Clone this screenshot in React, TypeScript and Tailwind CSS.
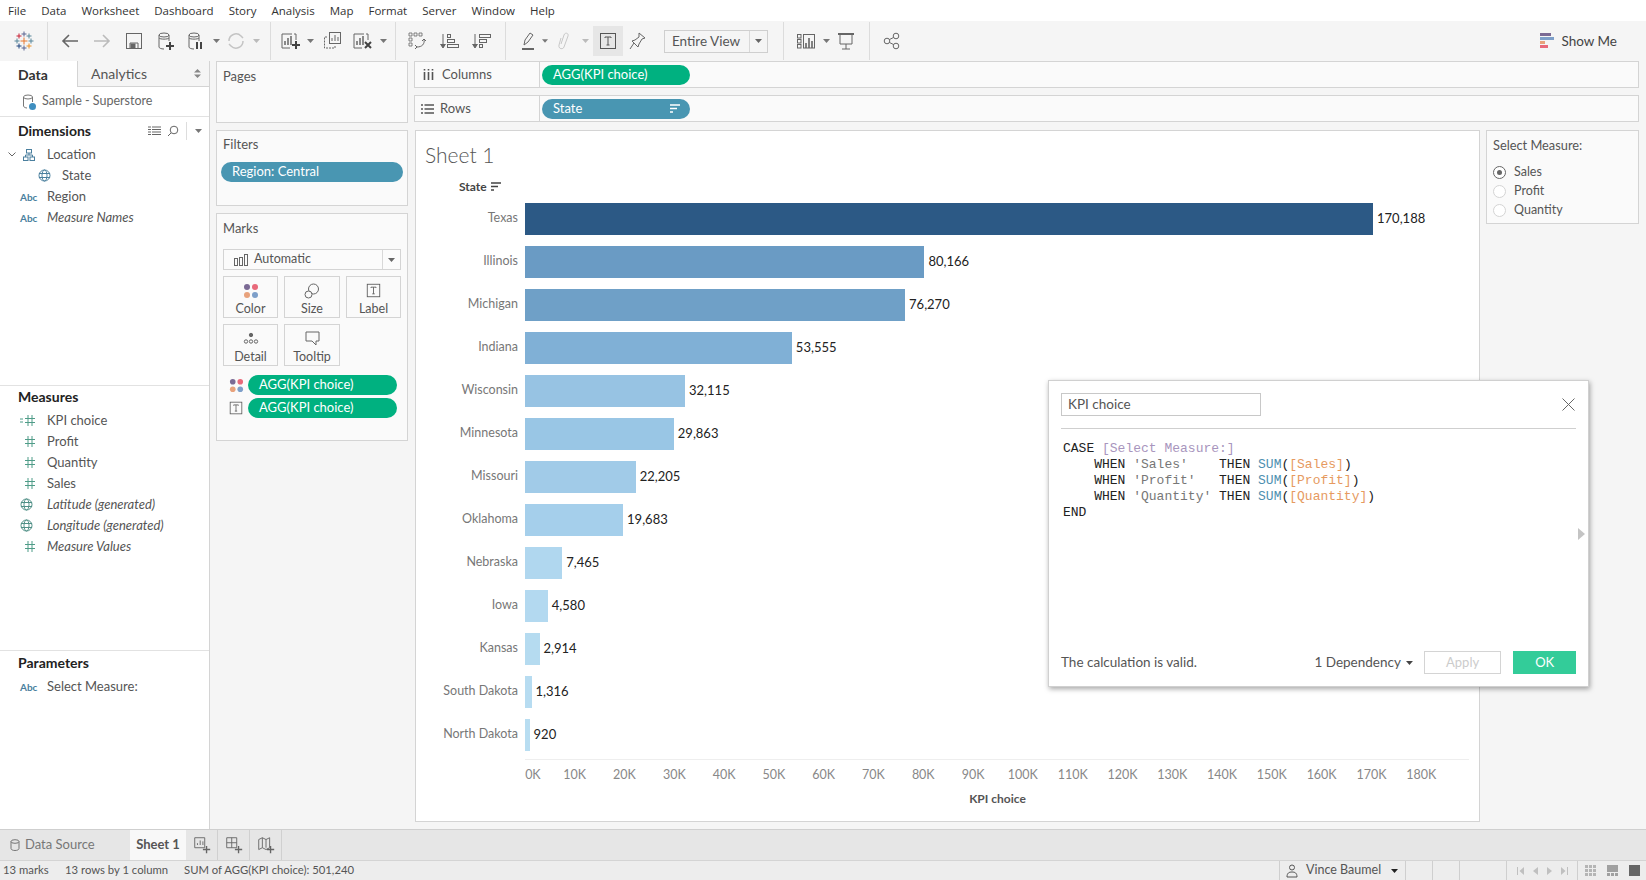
import React from "react";

const menus = ["File", "Data", "Worksheet", "Dashboard", "Story", "Analysis", "Map", "Format", "Server", "Window", "Help"];

const bars = [
  { state: "Texas", value: 170188, color: "#2c5985" },
  { state: "Illinois", value: 80166, color: "#6a9bc4" },
  { state: "Michigan", value: 76270, color: "#6fa0c7" },
  { state: "Indiana", value: 53555, color: "#80b0d6" },
  { state: "Wisconsin", value: 32115, color: "#97c3e3" },
  { state: "Minnesota", value: 29863, color: "#99c6e5" },
  { state: "Missouri", value: 22205, color: "#a1cbe8" },
  { state: "Oklahoma", value: 19683, color: "#a5cfeb" },
  { state: "Nebraska", value: 7465, color: "#b0d7ef" },
  { state: "Iowa", value: 4580, color: "#b3d9f0" },
  { state: "Kansas", value: 2914, color: "#b5dbf0" },
  { state: "South Dakota", value: 1316, color: "#b7dcf1" },
  { state: "North Dakota", value: 920, color: "#b8ddf1" },
];

const ticks = Array.from({ length: 19 }, (_, i) => `${i * 10}K`);

function Ico({ children, size = 22, className = "text-[#666]" }: { children: React.ReactNode; size?: number; className?: string }) {
  return (
    <svg width={size} height={size} viewBox="0 0 22 22" fill="none" stroke="currentColor" strokeWidth="1" className={className}>
      {children}
    </svg>
  );
}

function Caret({ className = "text-[#777]" }: { className?: string }) {
  return (
    <svg width="7" height="4" viewBox="0 0 7 4" className={className}>
      <path d="M0 0h7L3.5 4z" fill="currentColor" />
    </svg>
  );
}

function Sep() {
  return <div className="h-[38px] w-px flex-none bg-[#dcdcdc]" />;
}

function TableauLogo() {
  const cross = (x: number, y: number, c: string, r = 2.5) => (
    <path key={`${x}-${y}`} d={`M${x - r} ${y}h${r * 2}M${x} ${y - r}v${r * 2}`} stroke={c} strokeWidth="1" />
  );
  return (
    <svg width="20" height="20" viewBox="0 0 20 20" fill="none">
      {cross(10, 10, "#e8762c", 3.5)}
      {cross(10, 3, "#5b6591")}
      {cross(10, 17, "#5b6591")}
      {cross(3, 10, "#59879b")}
      {cross(17, 10, "#59879b")}
      {cross(5, 5, "#c72035")}
      {cross(15, 5, "#59879b")}
      {cross(5, 15, "#1f457e")}
      {cross(15, 15, "#eb9129")}
    </svg>
  );
}

function BarsIcon({ plus, cross }: { plus?: boolean; cross?: boolean }) {
  return (
    <Ico>
      <path d="M13 4H3v14h8" />
      <path d="M6 15v-4M9 15V8M12 15V6" strokeWidth="1.5" />
      <path d="M15 4h2v6" />
      {plus && <path d="M17 11v8M13 15h8" stroke="#444" strokeWidth="2" />}
      {cross && <path d="M14 12l6 6M20 12l-6 6" stroke="#444" strokeWidth="2" />}
    </Ico>
  );
}

function DbIcon({ badge }: { badge: "plus" | "pause" }) {
  return (
    <Ico>
      <ellipse cx="9" cy="5" rx="5" ry="2" />
      <path d="M4 5v12c0 1 2 2 5 2M14 5v6M4 8c1 1.500 9 1.500 10 0" />
      {badge === "plus" && <path d="M15 12v8M11 16h8" stroke="#444" strokeWidth="2" />}
      {badge === "pause" && <path d="M12 12v7M16 12v7" stroke="#444" strokeWidth="2" />}
    </Ico>
  );
}

function SortIcon({ desc }: { desc?: boolean }) {
  return (
    <Ico>
      <path d="M5 4v13M2.500 14L5 18l2.500-4" fill="#666" />
      {desc ? (
        <>
          <rect x="9.500" y="4.500" width="11" height="3" />
          <rect x="9.500" y="9.500" width="7" height="3" />
          <rect x="9.500" y="14.500" width="3" height="3" />
        </>
      ) : (
        <>
          <rect x="9.500" y="4.500" width="3" height="3" />
          <rect x="9.500" y="9.500" width="7" height="3" />
          <rect x="9.500" y="14.500" width="11" height="3" />
        </>
      )}
    </Ico>
  );
}

function TBox({ size = 18 }: { size?: number }) {
  return (
    <svg width={size} height={size} viewBox="0 0 18 18" fill="none" className="text-[#555]">
      <rect x="1.500" y="1.500" width="15" height="15" stroke="currentColor" />
      <path d="M6 6V5h6v1M9 5v8M7.500 13h3" stroke="currentColor" />
    </svg>
  );
}

function FourDots({ size = 16 }: { size?: number }) {
  return (
    <svg width={size} height={size} viewBox="0 0 16 16">
      <circle cx="4" cy="4" r="3" fill="#7b6a94" />
      <circle cx="12" cy="4" r="3" fill="#e8697a" />
      <circle cx="4" cy="12" r="3" fill="#e8a27c" />
      <circle cx="12" cy="12" r="3" fill="#7d9fc9" />
    </svg>
  );
}

function SortLines({ className = "text-[#555]", size = 12 }: { className?: string; size?: number }) {
  return (
    <svg width={size} height={size} viewBox="0 0 12 12" className={className}>
      <path d="M1 2h10M1 5.500h7M1 9h3" stroke="currentColor" strokeWidth="1.600" fill="none" />
    </svg>
  );
}

function Globe({ className = "text-[#4f8f86]" }: { className?: string }) {
  return (
    <svg width="13" height="13" viewBox="0 0 13 13" fill="none" stroke="currentColor" className={className}>
      <circle cx="6.500" cy="6.500" r="5.500" />
      <ellipse cx="6.500" cy="6.500" rx="2.500" ry="5.500" />
      <path d="M1 4.500h11M1 8.500h11" />
    </svg>
  );
}

function Hash({ calc }: { calc?: boolean }) {
  return (
    <svg width="16" height="13" viewBox="0 0 16 13" fill="none" stroke="#4f9c88" className="flex-none">
      <path d="M8 1v11M12 1v11M5 4.500h10M5 8.500h10" />
      {calc && <path d="M0 5h3M0 8h3" />}
    </svg>
  );
}

function Abc() {
  return <span className="w-[17px] text-[10px] leading-none font-bold text-[#4a7f9e]">Abc</span>;
}

function FieldRow({ icon, name, italic, indent }: { icon: React.ReactNode; name: string; italic?: boolean; indent?: boolean }) {
  return (
    <div className="flex h-[21px] items-center text-[13px] text-[#555]">
      <div className={indent ? "ml-[38px] flex w-[24px] items-center" : "ml-[20px] flex w-[27px] items-center"}>{icon}</div>
      <span className={italic ? "italic" : ""}>{name}</span>
    </div>
  );
}

function Pill({ label, color, sort, className = "" }: { label: string; color: "green" | "blue"; sort?: boolean; className?: string }) {
  return (
    <div
      className={`flex h-[20px] items-center justify-between rounded-full pl-[11px] pr-[9px] text-[13px] text-white ${
        color === "green" ? "bg-[#00b180]" : "bg-[#4996b2]"
      } ${className}`}
    >
      <span>{label}</span>
      {sort && <SortLines className="text-white" />}
    </div>
  );
}

function MarkBtn({ label, icon }: { label: string; icon: React.ReactNode }) {
  return (
    <div className="flex h-[42px] flex-col items-center border border-[#d4d4d4] pt-[5px] text-[12.500px] text-[#555]">
      <div className="flex h-[17px] items-center">{icon}</div>
      <span className="mt-[2px] leading-[16px]">{label}</span>
    </div>
  );
}

function TabIcon({ children }: { children: React.ReactNode }) {
  return <div className="flex w-[32px] items-center justify-center border-r border-[#d0d0d0]">{children}</div>;
}

export default function App() {
  return (
    <div className="relative flex h-[880px] w-[1646px] flex-col overflow-hidden bg-[#f5f5f5] font-['Lato',sans-serif] text-[#555]">
      {/* menu */}
      <div className="flex h-[21px] items-center gap-[15px] bg-white pl-[8px] font-['Open_Sans',sans-serif] text-[11.500px] text-[#333]">
        {menus.map((m) => (
          <span key={m}>{m}</span>
        ))}
      </div>

      {/* toolbar */}
      <div className="flex h-[40px] items-center">
        <div className="flex w-[47px] justify-center"><TableauLogo /></div>
        <Sep />
        <div className="ml-[6px] flex w-[32px] justify-center">
          <Ico className="text-[#666]"><path d="M19 11H4M10 5l-6 6 6 6" strokeWidth="1.600" /></Ico>
        </div>
        <div className="flex w-[32px] justify-center">
          <Ico className="text-[#bbb]"><path d="M3 11h15M12 5l6 6-6 6" strokeWidth="1.600" /></Ico>
        </div>
        <div className="flex w-[32px] justify-center">
          <Ico><rect x="3.500" y="3.500" width="15" height="15" /><path d="M7 18v-5h8v5" /><rect x="8" y="14" width="4" height="4" fill="#666" /></Ico>
        </div>
        <div className="flex w-[32px] justify-center"><DbIcon badge="plus" /></div>
        <div className="flex w-[28px] justify-center"><DbIcon badge="pause" /></div>
        <div className="flex w-[12px] justify-center"><Caret /></div>
        <div className="flex w-[28px] justify-center">
          <Ico className="text-[#c4c4c4]"><path d="M4 11a7 7 0 0 1 12-5l2 2M18 11a7 7 0 0 1-12 5l-2-2" strokeWidth="1.500" /></Ico>
        </div>
        <div className="flex w-[12px] justify-center"><Caret className="text-[#bbb]" /></div>
        <div className="ml-[8px]"><Sep /></div>
        <div className="ml-[4px] flex w-[30px] justify-center"><BarsIcon plus /></div>
        <div className="flex w-[10px] justify-center"><Caret /></div>
        <div className="ml-[2px] flex w-[30px] justify-center">
          <Ico><rect x="8.500" y="2.500" width="11" height="11" /><path d="M11 11V8M14 11V5M17 11V7" /><path d="M6 7H3.500v11H14v-2" strokeDasharray="2 1" /></Ico>
        </div>
        <div className="flex w-[30px] justify-center"><BarsIcon cross /></div>
        <div className="flex w-[12px] justify-center"><Caret /></div>
        <div className="ml-[6px]"><Sep /></div>
        <div className="ml-[5px] flex w-[32px] justify-center">
          <Ico>
            <path d="M3 3h3v3H3zM8 3h3v3H8zM13 3h3v3h-3zM3 8h3v3H3zM3 13h3v3H3z" strokeWidth="0.800" />
            <path d="M18 9c1 5-2 8-7 8M9 15l2 2-2 2M16 11l2-2 2 2" />
          </Ico>
        </div>
        <div className="flex w-[32px] justify-center"><SortIcon /></div>
        <div className="flex w-[32px] justify-center"><SortIcon desc /></div>
        <div className="ml-[8px]"><Sep /></div>
        <div className="ml-[8px] flex w-[28px] justify-center">
          <Ico>
            <path d="M7 15l1-5 5-7 3 2-5 7zM5 19h12" />
            <path d="M5 19h12" strokeWidth="2" />
          </Ico>
        </div>
        <div className="flex w-[6px] justify-center"><Caret /></div>
        <div className="flex w-[32px] justify-center">
          <Ico className="text-[#c8c8c8]"><path d="M8 8l-2 7c-1 4 4 5 5 2l4-11c1-3-3-4-4-1l-3 9" /></Ico>
        </div>
        <div className="flex w-[10px] justify-center"><Caret className="text-[#bbb]" /></div>
        <div className="ml-[3px] flex h-[30px] w-[30px] items-center justify-center bg-[#e6e6e6]"><TBox /></div>
        <div className="flex w-[30px] justify-center">
          <Ico><path d="M12 3l6 5-3 1-3 5-1 3-6-6 3-1 4-3zM7 13l-4 6" /></Ico>
        </div>
        <div className="ml-[11px] flex h-[23px] w-[104px] items-center border border-[#cfcfcf] text-[13.500px] text-[#555]">
          <span className="flex-1 pl-[7px]">Entire View</span>
          <div className="flex h-full w-[18px] items-center justify-center border-l border-[#d8d8d8]"><Caret className="text-[#666]" /></div>
        </div>
        <div className="ml-[15px]"><Sep /></div>
        <div className="ml-[6px] flex w-[32px] justify-center">
          <Ico>
            <rect x="2.500" y="4.500" width="3.500" height="3.500" /><rect x="2.500" y="9.500" width="3.500" height="3.500" /><rect x="2.500" y="14.500" width="3.500" height="3.500" />
            <rect x="8.500" y="4.500" width="11" height="13.500" />
            <path d="M11 18v-5M14 18V8M17 18v-7" strokeWidth="1.600" />
          </Ico>
        </div>
        <div className="flex w-[8px] justify-center"><Caret /></div>
        <div className="flex w-[32px] justify-center">
          <Ico><path d="M3 4h16" strokeWidth="2" /><path d="M5 4v10h12V4M11 14v5M7 19h8" /></Ico>
        </div>
        <div className="ml-[7px]"><Sep /></div>
        <div className="ml-[6px] flex w-[32px] justify-center">
          <Ico><circle cx="6" cy="11" r="2.800" /><circle cx="15" cy="6" r="2.800" /><circle cx="15" cy="16" r="2.800" /><path d="M8.500 9.500l4-2M8.500 12.500l4 2" /></Ico>
        </div>
        <div className="ml-auto mr-[29px] flex items-center gap-[6px] text-[13.500px] text-[#444]">
          <svg width="15" height="16" viewBox="0 0 15 16">
            <rect x="0" y="0" width="11" height="3" fill="#7b6a94" />
            <rect x="0" y="4" width="14" height="3" fill="#7d9fc9" />
            <rect x="0" y="8" width="5" height="3" fill="#e8a27c" />
            <rect x="0" y="12" width="8" height="3" fill="#e8697a" />
          </svg>
          <span>Show Me</span>
        </div>
      </div>

      {/* body */}
      <div className="flex h-[768px]">
        {/* data pane */}
        <div className="flex w-[210px] flex-none flex-col border-r border-[#d4d4d4] bg-white">
          <div className="flex h-[26px] flex-none items-center text-[14px]">
            <div className="flex h-full w-[77px] items-center pl-[18px] font-bold text-[#333]">Data</div>
            <div className="flex h-full flex-1 items-center justify-between border-b border-l border-[#d4d4d4] bg-[#f5f5f5] pl-[13px] pr-[8px] text-[#555]">
              <span>Analytics</span>
              <svg width="7" height="9" viewBox="0 0 7 9"><path d="M0 3.500h7L3.500 0zM0 5.500h7L3.500 9z" fill="#888" /></svg>
            </div>
          </div>
          <div className="flex h-[30px] flex-none items-center gap-[6px] border-b border-[#e2e2e2] pl-[22px] text-[12.500px] text-[#666]">
            <svg width="14" height="16" viewBox="0 0 14 16" fill="none" stroke="#777">
              <ellipse cx="6" cy="3" rx="4.500" ry="2" />
              <path d="M1.500 3v9c0 1 2 2 3.500 2M10.500 3v5" />
              <circle cx="10.500" cy="12.500" r="3.500" fill="#3f8fc0" stroke="none" />
            </svg>
            <span>Sample - Superstore</span>
          </div>

          <div className="h-[268px] flex-none">
            <div className="flex h-[27px] items-center justify-between pl-[18px] pr-[7px]">
              <span className="text-[14px] font-bold text-[#222]">Dimensions</span>
              <div className="flex items-center text-[#666]">
                <svg width="13" height="10" viewBox="0 0 13 10" stroke="#666" fill="none"><path d="M0 1h3M4 1h9M0 3.500h3M4 3.500h9M0 6h3M4 6h9M0 8.500h3M4 8.500h9" /></svg>
                <svg width="12" height="12" viewBox="0 0 12 12" fill="none" stroke="#666" className="ml-[6px]"><circle cx="7" cy="5" r="3.800" /><path d="M4 8l-3 3" /></svg>
                <div className="ml-[7px] mr-[8px] h-[18px] w-px bg-[#ddd]" />
                <Caret />
              </div>
            </div>
            <div className="relative flex h-[21px] items-center text-[13px] text-[#555]">
              <svg width="8" height="5" viewBox="0 0 8 5" fill="none" stroke="#666" className="ml-[8px]"><path d="M.5.500L4 4 7.500.500" /></svg>
              <svg width="12" height="12" viewBox="0 0 12 12" fill="none" stroke="#4a7f9e" className="ml-[7px]">
                <rect x="3.500" y="0.500" width="5" height="3.500" /><rect x="0.500" y="8" width="4.500" height="3.500" /><rect x="7" y="8" width="4.500" height="3.500" /><path d="M6 4v2M2.500 8V6h7v2" />
              </svg>
              <span className="ml-[12px]">Location</span>
            </div>
            <FieldRow indent icon={<Globe className="text-[#4a7f9e]" />} name="State" />
            <FieldRow icon={<Abc />} name="Region" />
            <FieldRow icon={<Abc />} name="Measure Names" italic />
          </div>

          <div className="h-[265px] flex-none border-t border-[#e2e2e2]">
            <div className="flex h-[24px] items-center pb-[4px] pl-[18px] text-[14px] font-bold text-[#222]">Measures</div>
            <FieldRow icon={<Hash calc />} name="KPI choice" />
            <FieldRow icon={<Hash />} name="Profit" />
            <FieldRow icon={<Hash />} name="Quantity" />
            <FieldRow icon={<Hash />} name="Sales" />
            <FieldRow icon={<Globe />} name="Latitude (generated)" italic />
            <FieldRow icon={<Globe />} name="Longitude (generated)" italic />
            <FieldRow icon={<Hash />} name="Measure Values" italic />
          </div>

          <div className="flex-1 border-t border-[#e2e2e2]">
            <div className="flex h-[25px] items-center pb-[2px] pl-[18px] text-[14px] font-bold text-[#222]">Parameters</div>
            <FieldRow icon={<Abc />} name="Select Measure:" />
          </div>
        </div>

        {/* pages, filters, marks */}
        <div className="ml-[6px] flex w-[192px] flex-none flex-col gap-[7px] text-[13px]">
          <div className="h-[62px] border border-[#d4d4d4] bg-[#fafafa] pl-[6px] pt-[5px]">Pages</div>
          <div className="h-[76px] border border-[#d4d4d4] bg-[#fafafa] pt-[4px]">
            <div className="pl-[6px]">Filters</div>
            <Pill label="Region: Central" color="blue" className="mx-[4px] mt-[7px]" />
          </div>
          <div className="h-[228px] border border-[#d4d4d4] bg-[#fafafa] px-[6px] pt-[5px]">
            <div className="h-[30px]">Marks</div>
            <div className="flex h-[21px] items-center border border-[#d4d4d4] bg-[#fbfbfb] text-[12.500px]">
              <svg width="14" height="12" viewBox="0 0 14 12" fill="none" stroke="#666" className="ml-[10px]">
                <rect x="0.500" y="4.500" width="3" height="7" /><rect x="5.500" y="3.500" width="3" height="8" /><rect x="10.500" y="0.500" width="3" height="11" />
              </svg>
              <span className="ml-[6px] flex-1">Automatic</span>
              <div className="flex h-full w-[18px] items-center justify-center border-l border-[#d8d8d8]"><Caret className="text-[#666]" /></div>
            </div>
            <div className="mt-[6px] grid w-[178px] grid-cols-[55px_56px_55px] gap-[6px]">
              <MarkBtn label="Color" icon={<FourDots />} />
              <MarkBtn
                label="Size"
                icon={
                  <svg width="16" height="16" viewBox="0 0 16 16" fill="none" stroke="#666">
                    <circle cx="9.500" cy="6" r="5" /><circle cx="4.500" cy="11.500" r="3.500" fill="#fafafa" />
                  </svg>
                }
              />
              <MarkBtn label="Label" icon={<TBox size={15} />} />
              <MarkBtn
                label="Detail"
                icon={
                  <svg width="16" height="14" viewBox="0 0 16 14" stroke="#666" fill="none">
                    <circle cx="8" cy="3" r="1.700" fill="#666" /><circle cx="3" cy="9.500" r="1.700" /><circle cx="8" cy="9.500" r="1.700" /><circle cx="13" cy="9.500" r="1.700" />
                  </svg>
                }
              />
              <MarkBtn
                label="Tooltip"
                icon={
                  <svg width="15" height="15" viewBox="0 0 15 15" fill="none" stroke="#666"><path d="M1 1h13v9h-3v4l-4-4H1z" /></svg>
                }
              />
            </div>
            <div className="mt-[9px] flex items-center">
              <div className="flex w-[25px] pl-[6px]"><FourDots size={15} /></div>
              <Pill label="AGG(KPI choice)" color="green" className="w-[149px]" />
            </div>
            <div className="mt-[3px] flex items-center">
              <div className="flex w-[25px] pl-[6px]"><TBox size={14} /></div>
              <Pill label="AGG(KPI choice)" color="green" className="w-[149px]" />
            </div>
          </div>
        </div>

        {/* shelves and view */}
        <div className="ml-[6px] flex w-[1225px] flex-none flex-col">
          <div className="flex h-[27px] items-center border border-[#d4d4d4] bg-[#fafafa] text-[13px]">
            <div className="flex h-full w-[125px] flex-none items-center gap-[8px] border-r border-[#d4d4d4] pl-[8px]">
              <svg width="11" height="11" viewBox="0 0 11 11" stroke="#555" strokeWidth="1.600"><path d="M1.500 3v8M5.500 3v8M9.500 3v8" /><path d="M1.500 0v1.500M5.500 0v1.500M9.500 0v1.500" /></svg>
              <span>Columns</span>
            </div>
            <Pill label="AGG(KPI choice)" color="green" className="ml-[2px] w-[148px]" />
          </div>
          <div className="mt-[7px] flex h-[27px] items-center border border-[#d4d4d4] bg-[#fafafa] text-[13px]">
            <div className="flex h-full w-[125px] flex-none items-center gap-[6px] border-r border-[#d4d4d4] pl-[6px]">
              <svg width="13" height="10" viewBox="0 0 13 10" stroke="#555" strokeWidth="1.400"><path d="M0 1h2M3.500 1H13M0 5h2M3.500 5H13M0 9h2M3.500 9H13" /></svg>
              <span>Rows</span>
            </div>
            <Pill label="State" color="blue" sort className="ml-[2px] w-[148px]" />
          </div>

          <div className="mt-[8px] flex flex-1 items-start pl-[1px]">
            <div className="h-[692px] w-[1065px] flex-none border border-[#d4d4d4] bg-white">
              <div className="pl-[9px] pt-[11px] text-[21px] font-light leading-[26px] text-[#555]">Sheet 1</div>
              <div className="flex h-[29px] items-center pl-[43px] pt-[9px] text-[12px] font-bold text-[#444]">
                <span>State</span>
                <SortLines className="ml-[3px] text-[#444]" />
              </div>
              <div>
                {bars.map((b) => (
                  <div key={b.state} className="flex h-[43px] items-center">
                    <div className="w-[102px] flex-none text-right text-[12.500px] text-[#777]">{b.state}</div>
                    <div className="ml-[7px] flex h-[32px] flex-1 items-center">
                      <div className="h-full" style={{ width: b.value * 0.004983, backgroundColor: b.color }} />
                      <span className="ml-[4px] text-[13px] text-[#222]">{b.value.toLocaleString("en-US")}</span>
                    </div>
                  </div>
                ))}
              </div>
              <div className="ml-[109px] mr-[10px] mt-[3px] border-t border-[#eeeeee]" />
              <div className="ml-[84px] mt-[6px] flex text-[12.500px] text-[#888]">
                {ticks.map((t, i) => (
                  <div key={t} className={i === 0 ? "w-[49.800px] pl-[16px] text-center" : "w-[49.800px] text-center"}>
                    {t}
                  </div>
                ))}
              </div>
              <div className="ml-[109px] mt-[5px] w-[945px] text-center text-[12px] font-bold text-[#555]">KPI choice</div>
            </div>

            {/* parameter card */}
            <div className="ml-[6px] h-[94px] w-[153px] flex-none border border-[#d4d4d4] bg-[#fafafa] pl-[6px] pt-[5px] text-[12.500px]">
              <div className="h-[27px] text-[12.800px]">Select Measure:</div>
              <div className="flex h-[19px] items-center gap-[8px]">
                <div className="flex h-[13px] w-[13px] items-center justify-center rounded-full border border-[#666] bg-white">
                  <div className="h-[5px] w-[5px] rounded-full bg-[#666]" />
                </div>
                <span>Sales</span>
              </div>
              <div className="flex h-[19px] items-center gap-[8px]">
                <div className="h-[13px] w-[13px] rounded-full border border-[#d4d4d4] bg-white" />
                <span>Profit</span>
              </div>
              <div className="flex h-[19px] items-center gap-[8px]">
                <div className="h-[13px] w-[13px] rounded-full border border-[#d4d4d4] bg-white" />
                <span>Quantity</span>
              </div>
            </div>
          </div>
        </div>
      </div>

      {/* sheet tabs */}
      <div className="flex h-[31px] flex-none border-t border-[#cfcfcf] bg-[#e6e6e6]">
        <div className="flex w-[130px] items-center pl-[10px] text-[13px] text-[#777]">
          <svg width="10" height="12" viewBox="0 0 10 12" fill="none" stroke="#777" className="mr-[5px]">
            <ellipse cx="5" cy="2.500" rx="4" ry="1.800" /><path d="M1 2.500v7c0 1 1.500 2 4 2s4-1 4-2v-7" />
          </svg>
          <span>Data Source</span>
        </div>
        <div className="flex w-[56px] items-center justify-center bg-[#f8f8f8] text-[13px] font-bold text-[#555]">Sheet 1</div>
        <TabIcon>
          <Ico size={20}><path d="M3 3h11v11H3zM6 11V9M9 11V6M12 11V7" /><path d="M16 12v8M12 16h8" stroke="#666" strokeWidth="1.500" /></Ico>
        </TabIcon>
        <TabIcon>
          <Ico size={20}><path d="M3 3h11v11H3zM8.500 3v11M3 8.500h11" /><path d="M16 12v8M12 16h8" stroke="#666" strokeWidth="1.500" /></Ico>
        </TabIcon>
        <TabIcon>
          <Ico size={20}><path d="M3 5l4-2 4 2 4-2v11l-4 2-4-2-4 2zM7 3v11M11 5v9" /><path d="M16 12v8M12 16h8" stroke="#666" strokeWidth="1.500" /></Ico>
        </TabIcon>
      </div>

      {/* status bar */}
      <div className="flex h-[20px] flex-none items-center border-t border-[#d4d4d4] bg-[#ededed] text-[11.300px] text-[#555]">
        <span className="ml-[3px] w-[45px] whitespace-nowrap">13 marks</span>
        <span className="ml-[17px] w-[101px] whitespace-nowrap">13 rows by 1 column</span>
        <span className="ml-[18px] whitespace-nowrap">SUM of AGG(KPI choice): 501,240</span>
        <div className="ml-auto flex h-full items-center">
          <div className="flex h-full w-[127px] items-center border-x border-[#cfcfcf] pl-[6px]">
            <svg width="12" height="14" viewBox="0 0 12 14" fill="none" stroke="#555"><circle cx="6" cy="3.500" r="2.500" /><path d="M1 13c0-4 2-5 5-5s5 1 5 5z" /></svg>
            <span className="ml-[8px] w-[69px] whitespace-nowrap text-[12.500px]">Vince Baumel</span>
            <Caret className="ml-[16px] text-[#222]" />
          </div>
          <div className="h-full w-[27px] border-r border-[#cfcfcf]" />
          <div className="h-full w-[27px] border-r border-[#cfcfcf]" />
          <div className="flex h-full w-[47px] border-r border-[#cfcfcf]" />
          <div className="flex h-full w-[71px] items-center justify-center gap-[9px] border-r border-[#cfcfcf] text-[#c0c0c0]">
            <svg width="7" height="8" viewBox="0 0 7 8"><path d="M0 0h1v8H0zM7 0v8L2.500 4z" fill="currentColor" /></svg>
            <svg width="5" height="8" viewBox="0 0 5 8"><path d="M5 0v8L0 4z" fill="currentColor" /></svg>
            <svg width="5" height="8" viewBox="0 0 5 8"><path d="M0 0v8l5-4z" fill="currentColor" /></svg>
            <svg width="7" height="8" viewBox="0 0 7 8"><path d="M6 0h1v8H6zM0 0v8l4.500-4z" fill="currentColor" /></svg>
          </div>
          <div className="flex w-[68px] items-center justify-center gap-[11px]">
            <svg width="11" height="11" viewBox="0 0 11 11" fill="#b5b5b5"><path d="M0 0h3v3H0zM4 0h3v3H4zM8 0h3v3H8zM0 4h3v3H0zM4 4h3v3H4zM8 4h3v3H8zM0 8h3v3H0zM4 8h3v3H4zM8 8h3v3H8z" /></svg>
            <svg width="11" height="11" viewBox="0 0 11 11" fill="#a0a0a0"><path d="M0 0h11v7H0zM0 8h3v3H0zM4 8h3v3H4zM8 8h3v3H8z" /></svg>
            <div className="h-[11px] w-[11px] bg-[#666]" />
          </div>
        </div>
      </div>

      {/* calculation dialog */}
      <div className="absolute left-[1048px] top-[380px] flex h-[307px] w-[541px] flex-col border border-[#d0d0d0] bg-white px-[12px] pt-[12px] shadow-[1px_2px_5px_rgba(0,0,0,0.35)]">
        <div className="flex h-[36px] flex-none items-start justify-between border-b border-[#cfcfcf]">
          <div className="flex h-[23px] w-[200px] items-center border border-[#c8c8c8] pl-[6px] text-[13.500px] text-[#555]">KPI choice</div>
          <svg width="13" height="13" viewBox="0 0 13 13" stroke="#666" className="mr-[1px] mt-[5px]"><path d="M.5.500l12 12M12.500.500l-12 12" /></svg>
        </div>
        <pre className="ml-[2px] mt-[12px] font-['Liberation_Mono',monospace] text-[13px] leading-[16px] text-[#222]">
          CASE <span className="text-[#a895bd]">[Select Measure:]</span>
          {"\n    WHEN "}
          <span className="text-[#777]">{"'Sales'   "}</span>
          {" THEN "}
          <span className="text-[#4d8fb0]">SUM</span>(<span className="text-[#e69a5f]">[Sales]</span>)
          {"\n    WHEN "}
          <span className="text-[#777]">{"'Profit'  "}</span>
          {" THEN "}
          <span className="text-[#4d8fb0]">SUM</span>(<span className="text-[#e69a5f]">[Profit]</span>)
          {"\n    WHEN "}
          <span className="text-[#777]">{"'Quantity'"}</span>
          {" THEN "}
          <span className="text-[#4d8fb0]">SUM</span>(<span className="text-[#e69a5f]">[Quantity]</span>)
          {"\nEND"}
        </pre>
        <div className="absolute left-[529px] top-[147px] h-0 w-0 border-y-[6px] border-l-[7px] border-y-transparent border-l-[#c4c4c4]" />
        <div className="mt-auto mb-[12px] flex h-[23px] items-center whitespace-nowrap text-[13.500px]">
          <span className="w-[255px] text-[#555]">The calculation is valid.</span>
          <span className="w-[90px] text-[#555]">1 Dependency</span>
          <Caret className="ml-[2px] text-[#444]" />
          <div className="ml-[11px] flex h-[23px] w-[78px] items-center justify-center border border-[#d4d4d4] text-[13px] text-[#ccc]">Apply</div>
          <div className="ml-[12px] flex h-[23px] w-[63px] items-center justify-center bg-[#33cc99] text-[13px] text-white">OK</div>
        </div>
      </div>
    </div>
  );
}
